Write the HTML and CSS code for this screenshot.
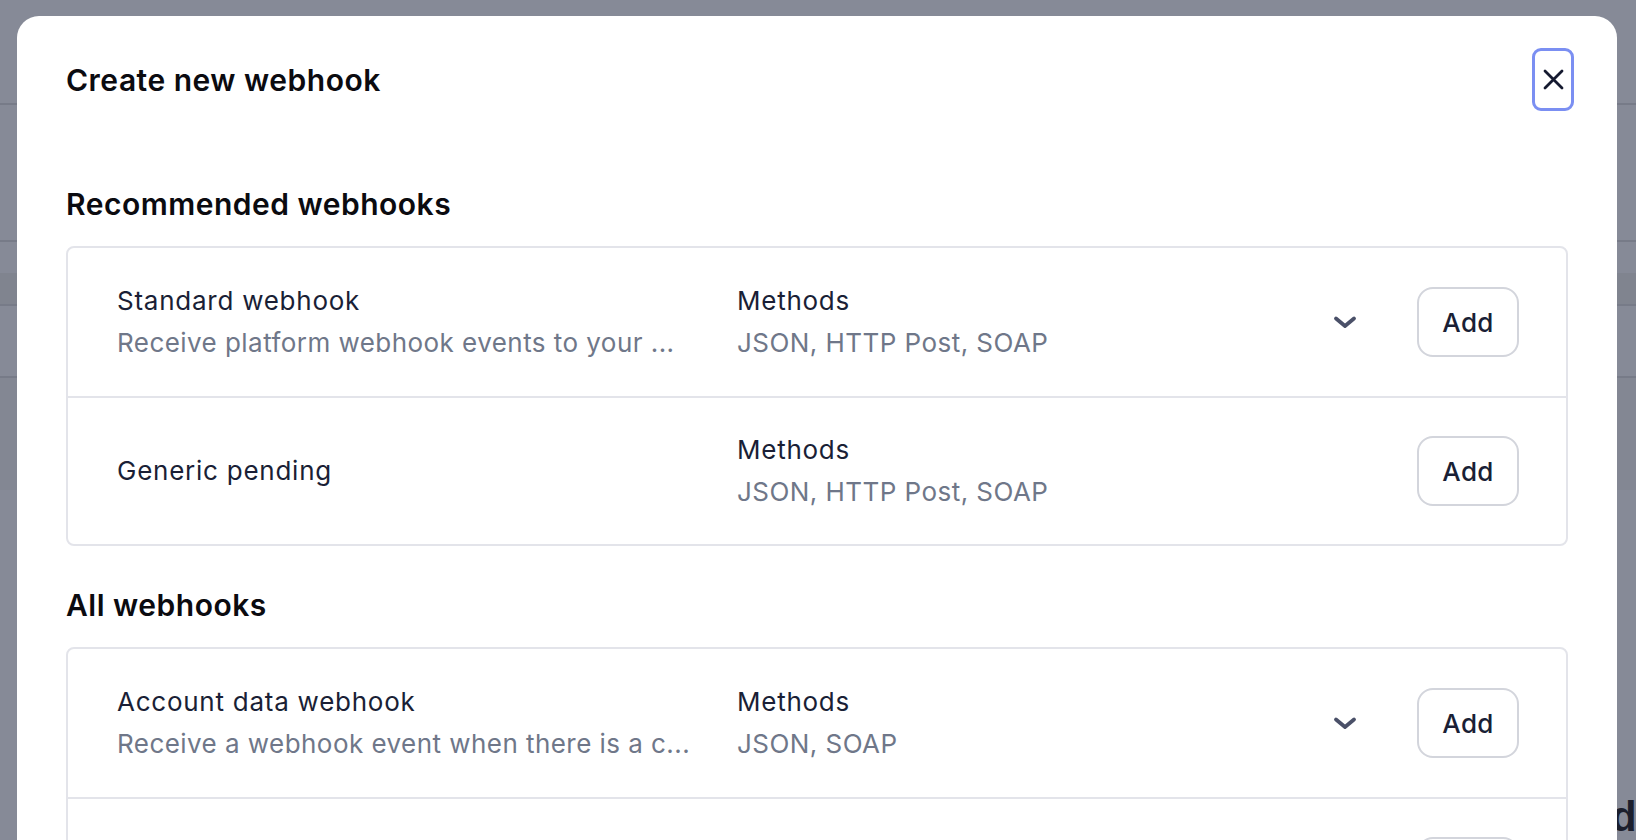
FILE: index.html
```html
<!DOCTYPE html>
<html lang="en">
<head>
<meta charset="utf-8">
<title>Create new webhook</title>
<link rel="stylesheet" href="styles.css">
</head>
<body>
<div class="page">
  <div class="page-top"></div>
  <div class="page-section"></div>
  <div class="page-table">
    <div class="pt-head"></div>
    <div class="pt-row"></div>
    <div class="pt-row pt-row-tall"></div>
  </div>
  <h2 class="page-heading">d</h2>
</div>

<div class="overlay">
  <div class="modal" role="dialog" aria-labelledby="modal-title">
    <header class="modal-header">
      <h1 class="modal-title" id="modal-title">Create new webhook</h1>
      <button class="close-btn" aria-label="Close">
        <svg width="21" height="21" viewBox="0 0 21 21" fill="none" stroke="currentColor" stroke-width="2.8" stroke-linecap="round"><path d="M2 2L19 19M19 2L2 19"/></svg>
      </button>
    </header>

    <section class="group group-first">
      <h2 class="group-title">Recommended webhooks</h2>
      <div class="card">
        <div class="row">
          <div class="cell">
            <div class="name">Standard webhook</div>
            <div class="muted ellipsis">Receive platform webhook events to your ...</div>
          </div>
          <div class="cell">
            <div class="name">Methods</div>
            <div class="muted">JSON, HTTP Post, SOAP</div>
          </div>
          <div class="chev"><svg width="24" height="24" viewBox="0 0 24 24" fill="none" stroke="currentColor" stroke-width="3.8" stroke-linecap="round" stroke-linejoin="round"><path d="M3 8.5L12 16L21 8.5"/></svg></div>
          <button class="add-btn">Add</button>
        </div>
        <div class="row">
          <div class="cell">
            <div class="name">Generic pending</div>
          </div>
          <div class="cell">
            <div class="name">Methods</div>
            <div class="muted">JSON, HTTP Post, SOAP</div>
          </div>
          <div class="chev"></div>
          <button class="add-btn">Add</button>
        </div>
      </div>
    </section>

    <section class="group">
      <h2 class="group-title">All webhooks</h2>
      <div class="card">
        <div class="row">
          <div class="cell">
            <div class="name">Account data webhook</div>
            <div class="muted ellipsis">Receive a webhook event when there is a c...</div>
          </div>
          <div class="cell">
            <div class="name">Methods</div>
            <div class="muted">JSON, SOAP</div>
          </div>
          <div class="chev"><svg width="24" height="24" viewBox="0 0 24 24" fill="none" stroke="currentColor" stroke-width="3.8" stroke-linecap="round" stroke-linejoin="round"><path d="M3 8.5L12 16L21 8.5"/></svg></div>
          <button class="add-btn">Add</button>
        </div>
        <div class="row row-clipped">
          <div class="cell"></div>
          <div class="cell"></div>
          <div class="chev"></div>
          <div class="add-btn add-btn-peek"></div>
        </div>
      </div>
    </section>
  </div>
</div>
</body>
</html>
```

FILE: styles.css
```css
* { box-sizing: border-box; }

html, body {
  margin: 0;
  height: 100%;
  overflow: hidden;
}

body {
  background: #868a97;
  font-family: Inter, "Noto Sans", "Liberation Sans", sans-serif;
}

.page {
  position: relative;
  height: 100%;
}
.page-top {
  height: 105px;
  border-bottom: 2px solid #777b88;
}
.page-section {
  height: 137px;
  border-bottom: 2px solid #777b88;
}
.page-table {
  margin-top: 31px;
}
.pt-head {
  height: 33px;
  background: #80848f;
  border-bottom: 2px solid #777b88;
}
.pt-row {
  height: 72px;
  border-bottom: 2px solid #777b88;
}
.pt-row-tall {
  height: 112px;
  background: #838793;
  border-bottom: 0;
}
.page-heading {
  position: absolute;
  left: 1611px;
  top: 796px;
  margin: 0;
  font-family: "Liberation Sans", Arial, sans-serif;
  font-size: 42px;
  line-height: 42px;
  font-weight: 700;
  color: #1c1f2d;
}

/* modal */
.overlay {
  position: fixed;
  inset: 0;
  padding: 16px 19px 0 17px;
}
.modal {
  background: #ffffff;
  border-radius: 22px 22px 0 0;
  height: 900px;
  padding: 32px 49px 0 49px;
}
.modal-header {
  display: flex;
  align-items: center;
  justify-content: space-between;
  height: 63px;
}
.modal-title,
.group-title {
  margin: 0;
  font-size: 30px;
  line-height: 36px;
  font-weight: 600;
  color: #0b0b10;
  letter-spacing: 0.5px;
}
.close-btn {
  width: 42px;
  height: 63px;
  margin-right: -6px;
  padding: 0;
  border: 3px solid #7b8ff2;
  border-radius: 9px;
  background: #fff;
  color: #151a30;
  display: grid;
  place-items: center;
}

.group { margin-top: 41px; }
.group.group-first { margin-top: 75px; }
.group-title { margin-bottom: 24px; }

.card {
  border: 2px solid #e3e4ea;
  border-radius: 8px;
}
.row {
  display: grid;
  grid-template-columns: 580px 1fr 44px 102px;
  column-gap: 40px;
  align-items: center;
  height: 148px;
  padding: 0 47px 0 49px;
}
.row + .row {
  border-top: 2px solid #e3e4ea;
}
.cell {
  min-width: 0;
}
.name,
.muted {
  font-size: 26px;
  line-height: 42px;
  white-space: nowrap;
}
.name {
  color: #1a1f36;
  letter-spacing: 0.75px;
}
.muted {
  color: #6f7789;
  letter-spacing: 0.45px;
}
.ellipsis {
  overflow: hidden;
  text-overflow: ellipsis;
}
.chev {
  width: 24px;
  height: 24px;
  color: #4a5068;
}
.chev svg { display: block; }
.add-btn {
  width: 102px;
  height: 70px;
  padding: 0;
  border: 2px solid #d3d5dc;
  border-radius: 16px;
  background: #fff;
  font-family: inherit;
  font-size: 26px;
  font-weight: 500;
  letter-spacing: 0.3px;
  color: #1a1f36;
}
.row-clipped {
  align-items: start;
}
.add-btn-peek {
  margin-top: 38px;
}
```
